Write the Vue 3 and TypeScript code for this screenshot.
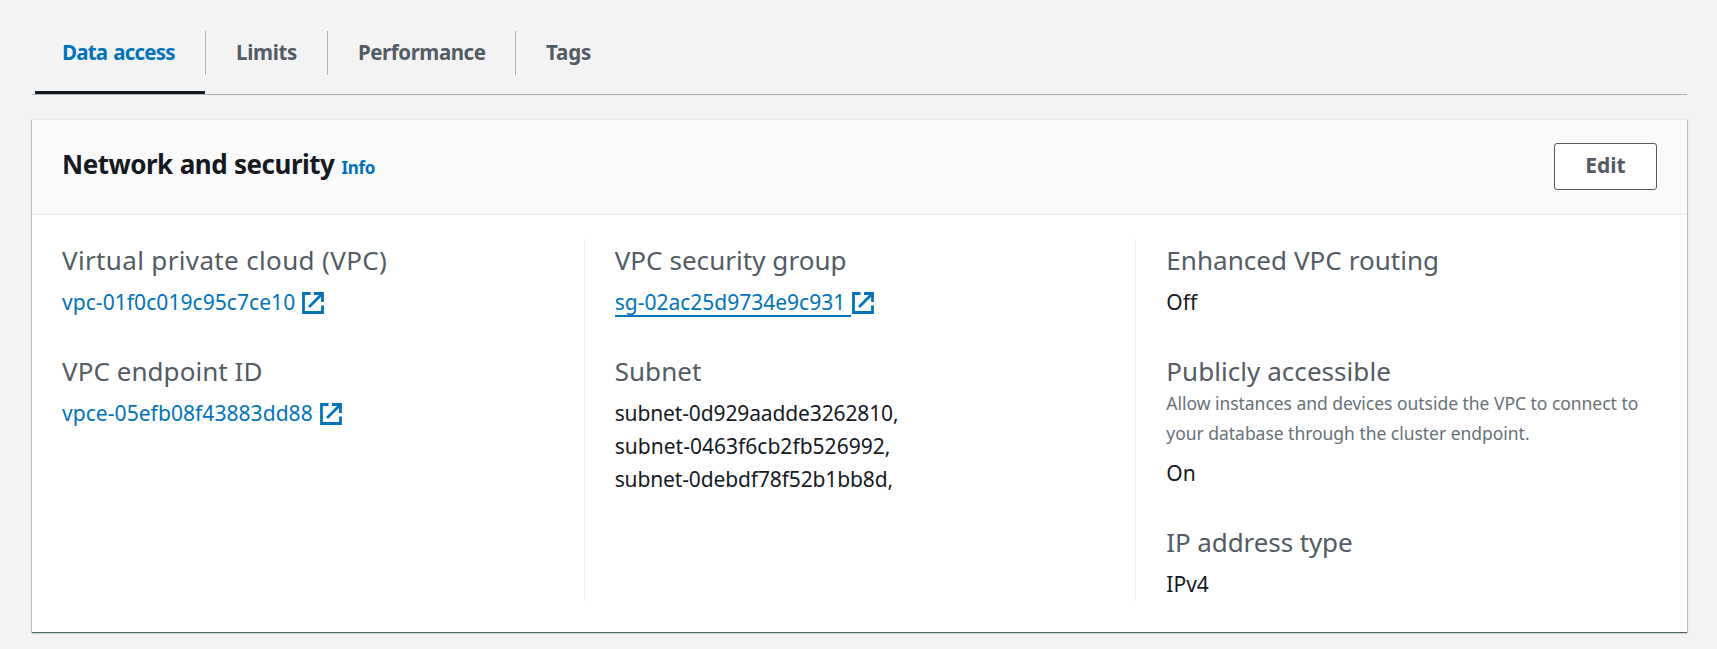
<script setup lang="ts">
interface Field {
  label: string
  hint?: string
  values: string[]
  link?: boolean
  active?: boolean
  tone?: string
}

const tabs = [
  { label: 'Data access', key: 'access' },
  { label: 'Limits', key: 'limits' },
  { label: 'Performance', key: 'performance' },
  { label: 'Tags', key: 'tags' },
]

const columns: Field[][] = [
  [
    { label: 'Virtual private cloud (VPC)', values: ['vpc-01f0c019c95c7ce10'], link: true, tone: 'loose' },
    { label: 'VPC endpoint ID', values: ['vpce-05efb08f43883dd88'], link: true },
  ],
  [
    { label: 'VPC security group', values: ['sg-02ac25d9734e9c931'], link: true, active: true },
    {
      label: 'Subnet',
      values: ['subnet-0d929aadde3262810,', 'subnet-0463f6cb2fb526992,', 'subnet-0debdf78f52b1bb8d,'],
      tone: 'list',
    },
  ],
  [
    { label: 'Enhanced VPC routing', values: ['Off'] },
    {
      label: 'Publicly accessible',
      hint: 'Allow instances and devices outside the VPC to connect to your database through the cluster endpoint.',
      values: ['On'],
    },
    { label: 'IP address type', values: ['IPv4'], tone: 'tight' },
  ],
]
</script>

<template>
  <main class="page">
    <nav class="tabs">
      <a v-for="(tab, i) in tabs" :key="tab.key" class="tab" :class="[tab.key, { selected: i === 0 }]">
        <span class="tab-label">{{ tab.label }}</span>
      </a>
    </nav>

    <section class="card">
      <header class="card-header">
        <div class="heading">
          <h2 class="title">Network and security</h2>
          <a class="info">Info</a>
        </div>
        <button class="edit" type="button">Edit</button>
      </header>

      <div class="columns">
        <div v-for="(column, c) in columns" :key="c" class="column">
          <div v-for="field in column" :key="field.label" class="field" :class="field.tone">
            <div class="label">{{ field.label }}</div>
            <div v-if="field.hint" class="hint">{{ field.hint }}</div>
            <div class="values">
              <template v-if="field.link">
                <a v-for="v in field.values" :key="v" class="link">
                  <span class="link-text" :class="{ active: field.active }">{{ v }}</span>
                  <svg class="external" viewBox="0 0 22 22" fill="none" stroke="currentColor" stroke-width="2.8">
                    <path d="M8.5 1.5h-7v19h19v-7" />
                    <path d="M12 1.5h8.5V10M20 2L7 15" />
                  </svg>
                </a>
              </template>
              <template v-else>
                <div v-for="v in field.values" :key="v" class="value">{{ v }}</div>
              </template>
            </div>
          </div>
        </div>
      </div>
    </section>
  </main>
</template>

<style>
body {
  margin: 0;
  background: #f3f3f3;
}
</style>

<style scoped>
.page {
  box-sizing: border-box;
  height: 649px;
  padding: 31px 30px 0 32px;
  background: #f3f3f3;
  color: #16191f;
  font-family: 'Noto Sans', 'Open Sans', sans-serif;
  font-size: 21px;
  overflow: hidden;
}

.tabs {
  display: flex;
  height: 63px;
  padding-left: 3px;
  border-bottom: 1px solid #a9b3b6;
}

.tab {
  box-sizing: border-box;
  height: 63px;
  color: #545b64;
  font-size: 20.5px;
  font-weight: 700;
  letter-spacing: -0.45px;
}

.tab.selected {
  color: #0073bb;
  border-bottom: 3px solid #16191f;
  letter-spacing: -0.8px;
  word-spacing: 1.5px;
}

.access { width: 170px; }
.limits { width: 123px; }
.performance { width: 188px; }

.tab-label {
  display: block;
  box-sizing: border-box;
  height: 44px;
  padding-left: 30px;
  border-right: 1px solid #aab7b8;
  line-height: 42px;
  white-space: nowrap;
}

.tab.selected .tab-label { margin-right: -1px; padding-left: 27px; }
.limits .tab-label { padding-left: 31px; letter-spacing: -0.3px; }
.tags .tab-label { border-right: 0; letter-spacing: -0.1px; }

.card {
  box-sizing: border-box;
  width: 1655px;
  height: 513px;
  margin-top: 24px;
  background: #fff;
  border-top: 1px solid #eaeded;
  box-shadow: 0 1px 1px 0 rgba(0, 28, 36, 0.3), 1px 1px 1px 0 rgba(0, 28, 36, 0.15),
    -1px 1px 1px 0 rgba(0, 28, 36, 0.15), 0 1px 1px 0 rgba(0, 28, 36, 0.3);
}

.card-header {
  box-sizing: border-box;
  display: flex;
  align-items: flex-start;
  justify-content: space-between;
  height: 95px;
  padding: 23px 30px 0;
  background: #fafafa;
  border-bottom: 1px solid #eaeded;
}

.heading {
  display: flex;
  align-items: baseline;
  gap: 7px;
  padding-top: 1px;
}

.title {
  margin: 0;
  font-size: 26px;
  font-weight: 700;
  letter-spacing: -0.5px;
  word-spacing: 0.7px;
  line-height: 40px;
}

.info {
  color: #0073bb;
  font-size: 17px;
  font-weight: 700;
  letter-spacing: -0.3px;
}

.edit {
  box-sizing: border-box;
  width: 103px;
  height: 47px;
  padding: 0 0 3px;
  color: #545b64;
  background: #fff;
  border: 1px solid #545b64;
  border-radius: 3px;
  font: 700 21px 'Noto Sans', 'Open Sans', sans-serif;
}

.columns {
  display: grid;
  grid-template-columns: repeat(3, minmax(0, 1fr));
  height: 362px;
  margin-top: 24px;
}

.column {
  display: flex;
  flex-direction: column;
  gap: 35px;
  padding: 4px 29px 0 30px;
  border-left: 1px solid #eaeded;
}

.column:first-child {
  padding-left: 29px;
  border-left-color: transparent;
}

.column:first-child .link { letter-spacing: 0.06px; }

.label {
  color: #545b64;
  font-size: 26px;
  letter-spacing: 0.05px;
  line-height: 34px;
  white-space: nowrap;
}

.loose .label { letter-spacing: 0.35px; }
.tight .label { letter-spacing: -0.1px; }

.hint {
  color: #687078;
  font-size: 17.5px;
  letter-spacing: -0.03px;
  line-height: 30px;
}

.values {
  margin-top: 9px;
  line-height: 33px;
}

.value { white-space: nowrap; }
.list .value { letter-spacing: -0.13px; }
.list .value:nth-child(2) { letter-spacing: 0.02px; }

.link {
  display: flex;
  align-items: flex-start;
  height: 33px;
  color: #0073bb;
}

.link-text {
  box-sizing: border-box;
  height: 31px;
  padding-right: 6px;
  margin-right: 1px;
  border-bottom: 2px solid transparent;
}

.link-text.active { border-bottom-color: #0073bb; }

.external {
  width: 22px;
  height: 22px;
  margin-top: 6px;
}
</style>
